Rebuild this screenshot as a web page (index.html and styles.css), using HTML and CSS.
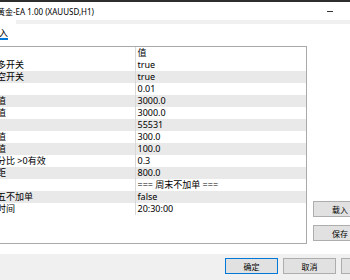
FILE: index.html
```html
<!DOCTYPE html>
<html>
<head>
  <title>EA 参数</title>
  <link rel="stylesheet" href="styles.css">
</head>
<body>

<div class="topline"></div>

<!-- Title bar -->
<div class="titlebar">
  <span class="title">黄金-EA 1.00 (XAUUSD,H1)</span>
  <span class="min-btn"></span>
</div>

<!-- Tabs -->
<div class="tabs">
  <div class="tab active"><span>入</span></div>
  <div class="tab-fill"></div>
</div>

<!-- Parameters page -->
<div class="page">
  <div class="grid-box">
    <table class="params">
      <colgroup><col class="c-name"><col></colgroup>
      <thead>
        <tr><th></th><th>值</th></tr>
      </thead>
      <tbody>
        <tr><td>多开关</td><td>true</td></tr>
        <tr><td>空开关</td><td>true</td></tr>
        <tr><td></td><td>0.01</td></tr>
        <tr><td>值</td><td>3000.0</td></tr>
        <tr><td>值</td><td>3000.0</td></tr>
        <tr><td></td><td>55531</td></tr>
        <tr><td>值</td><td>300.0</td></tr>
        <tr><td>值</td><td>100.0</td></tr>
        <tr><td>分比 &gt;0有效</td><td>0.3</td></tr>
        <tr><td>距</td><td>800.0</td></tr>
        <tr><td></td><td>=== 周末不加单 ===</td></tr>
        <tr><td>五不加单</td><td>false</td></tr>
        <tr><td>时间</td><td>20:30:00</td></tr>
      </tbody>
    </table>
  </div>
  <div class="side">
    <button>载入</button>
    <button>保存</button>
  </div>
</div>

<!-- Dialog buttons -->
<div class="footer">
  <button class="primary">确定</button>
  <button>取消</button>
  <button>重置</button>
</div>

</body>
</html>
```

FILE: styles.css
```css
body {
  margin: 0; width: 350px; height: 280px; overflow: hidden;
  font-family: "Noto Sans", "Noto Sans CJK SC", sans-serif; font-size: 9px;
  color: #000; background: #fff;
}
.topline { height: 2px; background: #2d2d2d; }

.titlebar { height: 18px; display: flex; align-items: center; justify-content: space-between; }
.title { font-size: 8px; margin-left: -3px; white-space: nowrap; }
.min-btn { width: 6px; height: 1px; background: #333; margin-right: 17px; }

.tabs { display: flex; height: 18px; }
.tab { width: 16px; padding-top: 6px; box-sizing: border-box; background: #fff; }
.tab span {
  display: inline-block; margin-left: -1px; line-height: 10px;
  border-bottom: 2px solid #0078d7;
}
.tab-fill { flex: 1; border-top: 4px solid #f0f0f0; }

.page { display: flex; height: 216px; padding-top: 8px; box-sizing: border-box; }
.grid-box {
  width: 308px; margin-left: -1px; height: 198px; box-sizing: border-box;
  border: 1px solid #a9a9a9; background: #fff; flex-shrink: 0;
}
.params { border-collapse: collapse; width: 100%; table-layout: fixed; }
.params col.c-name { width: 135px; }
.params th, .params td {
  height: 12px; line-height: 12px; padding: 0 0 0 2px;
  font-weight: normal; text-align: left; white-space: nowrap; overflow: hidden;
}
.params th:first-child, .params td:first-child {
  padding-left: 0; text-indent: -3px; border-right: 1px solid #d9d9d9;
}
.params tbody tr:nth-child(even) { background: #e9e9e9; }

.side {
  display: flex; flex-direction: column; justify-content: flex-end; gap: 8px;
  margin-left: 6px; padding-bottom: 13px;
}

button {
  font: inherit; font-size: 8px; width: 54px; height: 16px; padding: 0;
  background: #e1e1e1; border: 1px solid #adadad; color: #000; flex-shrink: 0;
}
button.primary { border-color: #0078d7; }

.footer {
  height: 26px; background: #f0f0f0; display: flex; gap: 5px;
  padding: 4px 0 0 225px; box-sizing: border-box;
}
.footer button { width: 53px; }
```
